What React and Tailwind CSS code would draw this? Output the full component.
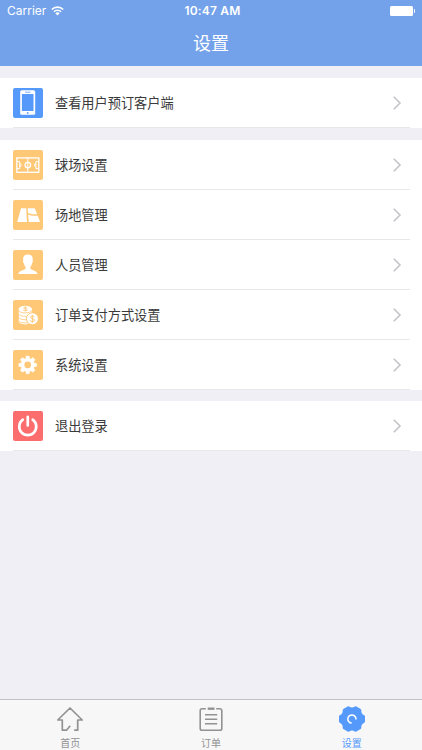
const groups = [
  [{ label: '查看用户预订客户端', icon: PhoneIcon, color: 'bg-[#559afb]' }],
  [
    { label: '球场设置', icon: CourtIcon, color: 'bg-[#fec877]' },
    { label: '场地管理', icon: FieldIcon, color: 'bg-[#fec877]' },
    { label: '人员管理', icon: PersonIcon, color: 'bg-[#fec877]' },
    { label: '订单支付方式设置', icon: CoinsIcon, color: 'bg-[#fec877]' },
    { label: '系统设置', icon: GearIcon, color: 'bg-[#fec877]' },
  ],
  [{ label: '退出登录', icon: PowerIcon, color: 'bg-[#fc6d6d]' }],
]

const tabs = [
  { label: '首页', icon: HomeIcon },
  { label: '订单', icon: OrderIcon },
  { label: '设置', icon: SettingsIcon, active: true },
]

function PhoneIcon() {
  return (
    <svg width="30" height="30" viewBox="0 0 30 30">
      <rect x="7.2" y="2.2" width="15" height="24.6" rx="1.6" fill="#fff" />
      <rect x="8.9" y="6" width="11.6" height="17" fill="#559afb" />
      <path d="M12 4.2h5.5" stroke="#559afb" strokeWidth="0.8" />
      <circle cx="14.7" cy="24.9" r="0.9" fill="#559afb" />
    </svg>
  )
}

function CourtIcon() {
  return (
    <svg width="30" height="30" viewBox="0 0 30 30" fill="none" stroke="#fff" strokeWidth="1.3">
      <rect x="3.8" y="7.9" width="22" height="14.4" />
      <path d="M14.8 8v14.2M3.9 11.6h2.8v7H3.9M25.7 11.6h-2.8v7h2.8M6.7 13.2a2 2 0 0 1 0 3.8M22.9 13.2a2 2 0 0 0 0 3.8" strokeWidth="1" />
      <circle cx="14.8" cy="15.1" r="2.8" />
    </svg>
  )
}

function FieldIcon() {
  return (
    <svg width="30" height="30" viewBox="0 0 30 30" fill="#fff">
      <path d="M8 8.2h5.2l.8 13.7H4.2z" />
      <path d="M14.7 8.2h7.1l2.3 6.1h-5l-4.1-1.3z" />
      <path d="M15.2 14.6l3.8 1.2h5.700l2.400 6.100H15.700z" />
    </svg>
  )
}

function PersonIcon() {
  return (
    <svg width="30" height="30" viewBox="0 0 30 30" fill="#fff">
      <path d="M14.9 4.5c-3.6 0-5 2.2-4.7 5 .1.6.1 1-.1 1.3-.4.7.1 2.1.7 2.5.4 1.8 1 2.9 1.8 3.8v1.5c-.4 1.6-6.7 1.8-7.3 5.4h19.2c-.6-3.6-6.8-3.8-7.2-5.4v-1.5c.8-.9 1.4-2 1.7-3.8.7-.4 1.1-1.8.7-2.5-.2-.3-.1-.7 0-1.3.3-3.3-1.5-5-4.8-5z" />
    </svg>
  )
}

function CoinsIcon() {
  return (
    <svg width="30" height="30" viewBox="0 0 30 30">
      <path d="M5.8 9v12.6c0 1.8 2.9 2.8 6.5 2.8s6.5-1 6.5-2.8V9z" fill="#fff" />
      <path d="M5.5 10.3c.8 3.4 12.7 3.4 13.5 0M5.5 13.8c.8 3.4 12.7 3.4 13.5 0M5.5 17.2c.8 3.4 12.7 3.4 13.5 0M5.5 20.5c.8 3.2 12.7 3.2 13.5 0" fill="none" stroke="#fec877" strokeWidth="0.8" />
      <ellipse cx="12.3" cy="8.9" rx="6.6" ry="3.1" fill="#fff" />
      <path d="M14.5 7.7c-1-.8-4-.7-4 .3s4 .8 4 1.8-3 1.3-4.3.3M12.4 6.7v4.7" fill="none" stroke="#fec877" strokeWidth="0.8" />
      <circle cx="19.4" cy="18.8" r="6" fill="#fff" stroke="#fec877" strokeWidth="1" />
      <path d="M21.5 16.9c-.7-1.3-4.1-1.2-4.1.4s4.2 1 4.2 2.9-3.6 1.9-4.4.4M19.4 14.9v7.8" fill="none" stroke="#fec877" strokeWidth="1" />
    </svg>
  )
}

function GearIcon() {
  return (
    <svg width="30" height="30" viewBox="0 0 30 30">
      <circle cx="14.7" cy="14.9" r="5" fill="none" stroke="#fff" strokeWidth="3.4" />
      {[0, 45, 90, 135, 180, 225, 270, 315].map(deg => (
        <path key={deg} d="M12.6 9.3l.6-3.3h3l.6 3.3z" fill="#fff" stroke="#fff" strokeWidth="0.4" strokeLinejoin="round" transform={`rotate(${deg} 14.7 14.9)`} />
      ))}
    </svg>
  )
}

function PowerIcon() {
  return (
    <svg width="30" height="30" viewBox="0 0 30 30" fill="none" stroke="#fff" strokeWidth="2.7" strokeLinecap="round">
      <path d="M9.8 8.7a8.5 8.5 0 1 0 9.9 0M14.75 5.9v8.6" />
    </svg>
  )
}

function HomeIcon() {
  return (
    <svg width="28" height="26" viewBox="0 0 28 26" fill="none" stroke="#929292" strokeWidth="1.7" strokeLinejoin="round">
      <path d="M18.2 24.2h3.5V14h4.5L14 2 1.8 14h4.5v10.2h4.2l3.7-4.4" />
    </svg>
  )
}

function OrderIcon() {
  return (
    <svg width="28" height="26" viewBox="0 0 28 26" fill="none" stroke="#929292" strokeWidth="1.6">
      <path d="M8.8 2.8H5.1a1.9 1.9 0 0 0-1.9 1.9v17.7a1.9 1.9 0 0 0 1.9 1.9h17.8a1.9 1.9 0 0 0 1.9-1.9V4.7a1.9 1.9 0 0 0-1.9-1.9h-3.7" />
      <path d="M10.7 2.7h6.8" strokeWidth="2.4" />
      <path d="M8 8.8h12.2M8 13.2h12.2M8 17.7h12.2" strokeWidth="1.4" />
    </svg>
  )
}

function SettingsIcon() {
  return (
    <svg width="28" height="26" viewBox="-14 -13 28 26">
      <path
        d="M11.7 2.5Q7.6 4.4 8 8.9L3.700 11.400Q0 8.800-3.700 11.400L-8 8.900Q-7.600 4.400-11.700 2.500V-2.500Q-7.600-4.400-8-8.900L-3.700-11.400Q0-8.800 3.700-11.400L8-8.900Q7.600-4.400 11.700-2.500Z"
        fill="#559afb"
        stroke="#559afb"
        strokeWidth="2.6"
        strokeLinejoin="round"
      />
      <path d="M-.3 4.1a4.1 4.1 0 1 1 4.3-3.6" fill="none" stroke="#fff" strokeWidth="1.5" />
    </svg>
  )
}

function StatusBar() {
  return (
    <div className="flex h-[22px] items-center justify-between px-[7px] text-[12px]">
      <div className="flex w-[99px] items-center gap-[5px]">
        <span>Carrier</span>
        <svg width="13" height="10" viewBox="0 0 13 10" fill="none" stroke="#fff" strokeWidth="1.6">
          <path d="M.8 3.5a8.1 8.1 0 0 1 11.4 0M2.9 5.8a5.1 5.1 0 0 1 7.2 0" />
          <path d="M6.5 9.4L4.4 7.3a3 3 0 0 1 4.2 0z" fill="#fff" stroke="none" />
        </svg>
      </div>
      <span className="pl-[3px] font-semibold tracking-[0.2px]">10:47 AM</span>
      <div className="flex w-[99px] items-center justify-end gap-px">
        <div className="h-[10px] w-[23px] rounded-[1.5px] bg-white" />
        <div className="h-1 w-[1.5px] rounded-r-full bg-white" />
      </div>
    </div>
  )
}

function Row({ item }) {
  const Icon = item.icon
  return (
    <div className="ml-[13px] mr-3 flex h-[50px] items-center border-b border-[#e8e8eb]">
      <div className={`h-[30px] w-[30px] overflow-hidden rounded-[2px] ${item.color}`}>
        <Icon />
      </div>
      <span className="ml-3 flex-1 pt-[2px] text-[13.2px] text-[#3a3a3a]">{item.label}</span>
      <svg className="mr-2" width="10" height="14" viewBox="0 0 10 14" fill="none" stroke="#c4c4c8" strokeWidth="1.6">
        <path d="M1.8.8L8 7l-6.200 6.200" />
      </svg>
    </div>
  )
}

export default function App() {
  return (
    <div className="flex h-[750px] w-[422px] flex-col bg-[#efeff5] font-['Inter','Noto_Sans_CJK_SC',sans-serif]">
      <header className="h-[66px] bg-[#73a2ea] text-white">
        <StatusBar />
        <h1 className="text-center text-[18px] leading-[44px]">设置</h1>
      </header>

      <main className="flex flex-1 flex-col gap-3 pt-3">
        {groups.map(items => (
          <section key={items[0].label} className="bg-white last:-mt-px">
            {items.map(item => <Row key={item.label} item={item} />)}
          </section>
        ))}
      </main>

      <nav className="grid h-[51px] grid-cols-3 border-t border-[#c2c2c6] bg-[#f7f7f8]">
        {tabs.map(({ label, icon: Icon, active }) => (
          <div key={label} className={`flex flex-col items-center pt-[6px] ${active ? 'text-[#559afb]' : 'text-[#929292]'}`}>
            <Icon />
            <span className="mt-[4px] text-[10px] leading-[14px]">{label}</span>
          </div>
        ))}
      </nav>
    </div>
  )
}
